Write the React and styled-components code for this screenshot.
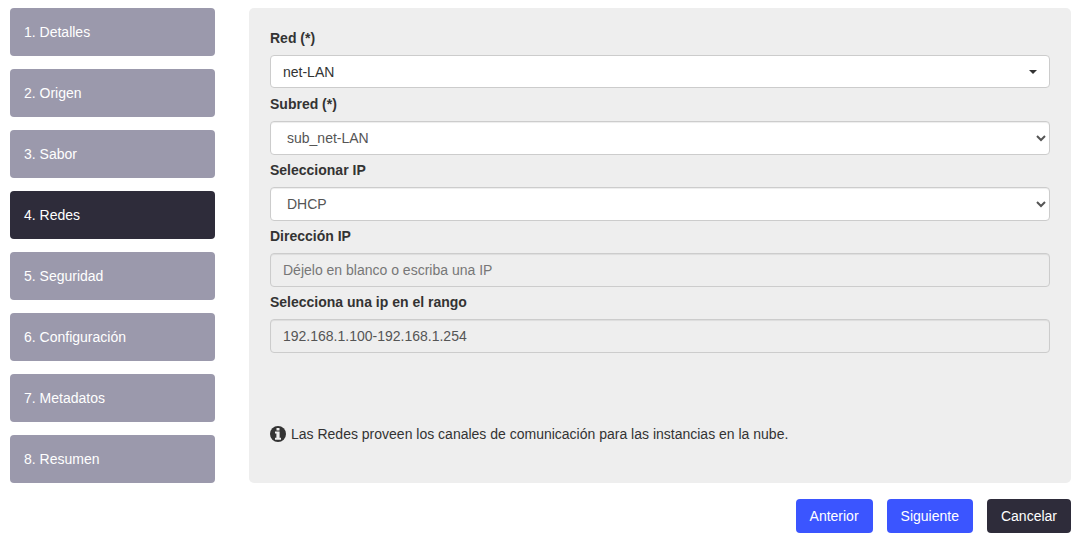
import { useState } from "react";
import styled, { createGlobalStyle } from "styled-components";

const GlobalStyle = createGlobalStyle`
    * {
        box-sizing: border-box;
    }
    body {
        margin: 0;
        background-color: #fff;
        color: #333;
        font-family: "Liberation Sans", Arial, sans-serif;
        font-size: 14px;
        line-height: 20px;
    }
    button, input, select {
        font-family: inherit;
        font-size: 14px;
        line-height: 20px;
    }
`;

const Wizard = styled.div`
    display: flex;
    flex-direction: column;
    gap: 16px;
    padding: 8px 12px 10px 10px;
`;

const Columns = styled.div`
    display: grid;
    grid-template-columns: minmax(120px, 205px) minmax(0, 1fr);
    column-gap: 34px;
`;

const Steps = styled.nav`
    display: flex;
    flex-direction: column;
    gap: 13px;
`;

const Step = styled.button`
    height: 48px;
    padding: 0 14px;
    border: 0;
    border-radius: 4px;
    background-color: ${prop => prop.$active ? '#2e2c3a' : '#9b99ac'};
    color: #fff;
    text-align: left;
    cursor: pointer;
`;

const Panel = styled.form`
    display: flex;
    flex-direction: column;
    gap: 5px;
    padding: 20px 21px;
    border-radius: 5px;
    background-color: #eee;
`;

const Field = styled.div`
    display: flex;
    flex-direction: column;
    gap: 7px;
    min-height: 61px;
`;

const Label = styled.label`
    font-weight: bold;
`;

const Input = styled.input`
    width: 100%;
    height: 34px;
    padding: 6px 12px;
    border: 1px solid #ccc;
    border-radius: 4px;
    background-color: #fff;
    box-shadow: inset 0 1px 1px rgba(0, 0, 0, 0.075);
    color: #555;
    &:disabled {
        background-color: #eee;
        opacity: 1;
    }
    &::placeholder {
        color: #777;
        opacity: 1;
    }
`;

const Select = styled(Input).attrs({ as: 'select' })``;

const Picker = styled.div`
    position: relative;
    select {
        appearance: none;
        display: block;
        height: 33px;
        box-shadow: none;
        color: #333;
    }
    &::after {
        content: '';
        position: absolute;
        top: 15px;
        right: 13px;
        border-top: 4px solid #333;
        border-left: 4px solid transparent;
        border-right: 4px solid transparent;
        pointer-events: none;
    }
`;

const Info = styled.p`
    display: flex;
    align-items: center;
    gap: 5px;
    margin: 66px 0 0;
    svg {
        flex: none;
    }
`;

const Actions = styled.div`
    display: flex;
    justify-content: flex-end;
    gap: 14px;
`;

const Button = styled.button`
    height: 34px;
    padding: 0 14px;
    border: 0;
    border-radius: 4px;
    background-color: ${prop => prop.$dark ? '#2e2c3a' : '#3b55ff'};
    color: #fff;
    cursor: pointer;
`;

const InfoIcon = () => (
    <svg width="16" height="16" viewBox="0 0 16 16" aria-hidden="true">
        <circle cx="8" cy="8" r="8" fill="#333" />
        <path d="M6.5 2h3v2.4h-3zM5 5.6h4.6v6.2H11v2H5v-2h1.4V7.6H5z" fill="#eee" />
    </svg>
)

const steps = ['Detalles', 'Origen', 'Sabor', 'Redes', 'Seguridad', 'Configuración', 'Metadatos', 'Resumen']

const App = () => {

    const [step, setStep] = useState(3);

    return (
        <>
            <GlobalStyle />
            <Wizard>
                <Columns>
                    <Steps>
                        {steps.map((name, i) => (
                            <Step key={name} type="button" $active={i === step} onClick={() => setStep(i)}>{`${i + 1}. ${name}`}</Step>
                        ))}
                    </Steps>
                    <Panel>
                        <Field>
                            <Label htmlFor="red">Red (*)</Label>
                            <Picker>
                                <Select id="red">
                                    <option>net-LAN</option>
                                </Select>
                            </Picker>
                        </Field>
                        <Field>
                            <Label htmlFor="subred">Subred (*)</Label>
                            <Select id="subred">
                                <option>sub_net-LAN</option>
                            </Select>
                        </Field>
                        <Field>
                            <Label htmlFor="modo">Seleccionar IP</Label>
                            <Select id="modo">
                                <option>DHCP</option>
                            </Select>
                        </Field>
                        <Field>
                            <Label htmlFor="ip">Dirección IP</Label>
                            <Input id="ip" placeholder="Déjelo en blanco o escriba una IP" disabled />
                        </Field>
                        <Field>
                            <Label htmlFor="rango">Selecciona una ip en el rango</Label>
                            <Input id="rango" defaultValue="192.168.1.100-192.168.1.254" disabled />
                        </Field>
                        <Info><InfoIcon />Las Redes proveen los canales de comunicación para las instancias en la nube.</Info>
                    </Panel>
                </Columns>
                <Actions>
                    <Button type="button" onClick={() => setStep(Math.max(step - 1, 0))}>Anterior</Button>
                    <Button type="button" onClick={() => setStep(Math.min(step + 1, steps.length - 1))}>Siguiente</Button>
                    <Button type="button" $dark>Cancelar</Button>
                </Actions>
            </Wizard>
        </>
    )
}

export default App;
